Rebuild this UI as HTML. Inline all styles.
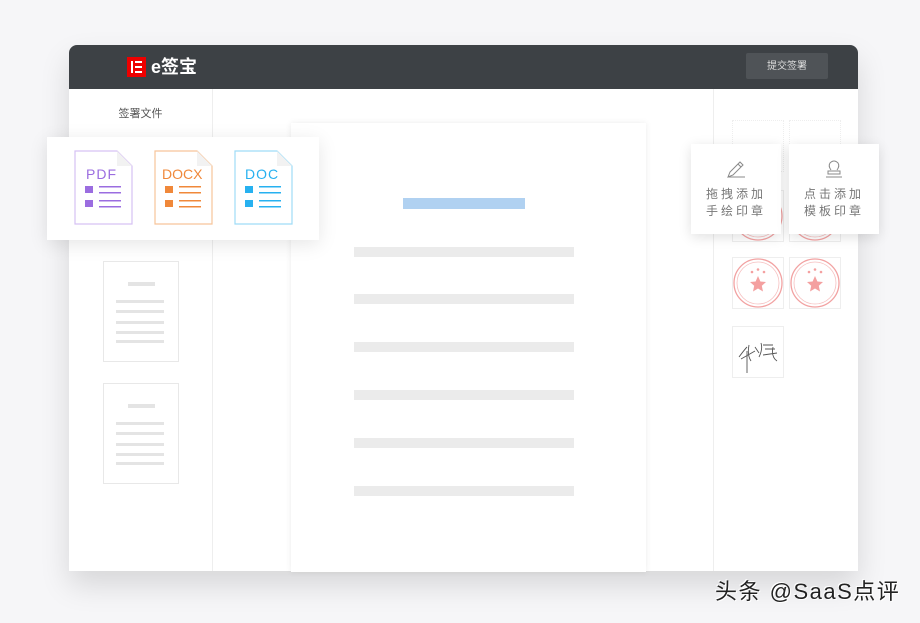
<!DOCTYPE html>
<html><head><meta charset="utf-8"><style>
*{margin:0;padding:0;box-sizing:border-box}
body{width:920px;height:623px;overflow:hidden;background:#f6f6f8;font-family:"Liberation Sans","Noto Sans CJK SC",sans-serif;position:relative}
.abs{position:absolute}
.win{left:69px;top:45px;width:789px;height:526px;background:#fff;border-radius:8px 8px 0 0;box-shadow:0 14px 30px rgba(0,0,0,0.13);overflow:hidden}
.hdr{left:0;top:0;width:789px;height:44px;background:#3d4145}
.gl{background:#ebebeb;height:10px}
.thumb{width:76px;height:101px;border:1px solid #e8e8e8;background:#fff}
.thumb i{position:absolute;background:#e4e4e4;height:3px;left:12px;width:48px}
.card{background:#fff;border:1px solid #eee}
.pop{background:#fff;box-shadow:0 3px 12px rgba(0,0,0,0.12);text-align:center;color:#777;font-size:12px;letter-spacing:3px;line-height:17px}
</style></head><body>
<div class="abs win">
 <div class="abs hdr">
  <div class="abs" style="left:58px;top:12px;width:19px;height:20px;background:#e00"><svg width="19" height="20"><rect x="4" y="4" width="2" height="12" fill="#fff"/><rect x="8" y="4" width="7" height="2" fill="#fff"/><rect x="8" y="9" width="7" height="2" fill="#fff"/><rect x="8" y="14" width="7" height="2" fill="#fff"/></svg></div>
  <div class="abs" style="left:82px;top:10px;color:#fff;font-size:18px;line-height:24px;font-weight:bold">e签宝</div>
  <div class="abs" style="left:677px;top:8px;width:82px;height:26px;background:#4f5357;border-radius:2px;color:#ddd;font-size:10px;line-height:14px;padding-top:7px;text-align:center">提交签署</div>
 </div>
 <div class="abs" style="left:143px;top:44px;width:1px;height:482px;background:#eee"></div>
 <div class="abs" style="left:644px;top:44px;width:1px;height:482px;background:#eee"></div>
 <div class="abs" style="left:0;top:60px;width:143px;text-align:center;font-size:11px;color:#555">签署文件</div>
 <div class="abs thumb" style="left:34px;top:216px"><i style="left:24px;width:27px;top:20px;height:4px"></i><i style="top:38px"></i><i style="top:48px"></i><i style="top:59px"></i><i style="top:69px"></i><i style="top:78px"></i></div>
 <div class="abs thumb" style="left:34px;top:338px"><i style="left:24px;width:27px;top:20px;height:4px"></i><i style="top:38px"></i><i style="top:48px"></i><i style="top:59px"></i><i style="top:69px"></i><i style="top:78px"></i></div>
</div>
<div class="abs" style="left:291px;top:123px;width:355px;height:449px;background:#fff;box-shadow:0 0 6px rgba(0,0,0,0.08)">
 <div class="abs" style="left:112px;top:75px;width:122px;height:11px;background:#b0d1f1"></div>
 <div class="abs gl" style="left:63px;top:124px;width:220px"></div>
 <div class="abs gl" style="left:63px;top:171px;width:220px"></div>
 <div class="abs gl" style="left:63px;top:219px;width:220px"></div>
 <div class="abs gl" style="left:63px;top:267px;width:220px"></div>
 <div class="abs gl" style="left:63px;top:315px;width:220px"></div>
 <div class="abs gl" style="left:63px;top:363px;width:220px"></div>
</div>
<div class="abs card" style="left:732px;top:120px;width:52px;height:52px;border-style:dotted"></div>
<div class="abs card" style="left:789px;top:120px;width:52px;height:52px;border-style:dotted"></div>
<div class="abs card" style="left:732px;top:190px;width:52px;height:52px"><svg width="50" height="50"><circle cx="25" cy="25" r="24" fill="none" stroke="#f2a2a2" stroke-width="1.3"/><circle cx="25" cy="25" r="21" fill="none" stroke="#f6c0c0" stroke-width="0.8"/></svg></div>
<div class="abs card" style="left:789px;top:190px;width:52px;height:52px"><svg width="50" height="50"><circle cx="25" cy="25" r="24" fill="none" stroke="#f2a2a2" stroke-width="1.3"/><circle cx="25" cy="25" r="21" fill="none" stroke="#f6c0c0" stroke-width="0.8"/></svg></div>
<div class="abs card" style="left:732px;top:257px;width:52px;height:52px"><svg width="50" height="50"><circle cx="25" cy="25" r="24" fill="none" stroke="#f2a2a2" stroke-width="1.3"/><circle cx="25" cy="25" r="21" fill="none" stroke="#f6c0c0" stroke-width="0.8"/><polygon points="25,18 27.4,23.5 33,24 28.8,27.8 30,33.5 25,30.5 20,33.5 21.2,27.8 17,24 22.6,23.5" fill="#f4a0a0"/><circle cx="19" cy="14" r="1.3" fill="#f4a0a0"/><circle cx="25" cy="11.5" r="1.3" fill="#f4a0a0"/><circle cx="31" cy="14" r="1.3" fill="#f4a0a0"/></svg></div>
<div class="abs card" style="left:789px;top:257px;width:52px;height:52px"><svg width="50" height="50"><circle cx="25" cy="25" r="24" fill="none" stroke="#f2a2a2" stroke-width="1.3"/><circle cx="25" cy="25" r="21" fill="none" stroke="#f6c0c0" stroke-width="0.8"/><polygon points="25,18 27.4,23.5 33,24 28.8,27.8 30,33.5 25,30.5 20,33.5 21.2,27.8 17,24 22.6,23.5" fill="#f4a0a0"/><circle cx="19" cy="14" r="1.3" fill="#f4a0a0"/><circle cx="25" cy="11.5" r="1.3" fill="#f4a0a0"/><circle cx="31" cy="14" r="1.3" fill="#f4a0a0"/></svg></div>
<div class="abs card" style="left:732px;top:326px;width:52px;height:52px"><svg width="50" height="50"><path d="M6 30 Q12 22 14 20 M8 32 L22 24 M16 18 Q14 28 18 34 M22 20 L26 26 M28 16 Q30 22 26 30 M30 18 L40 18 M32 22 L42 22 M30 28 L44 26 M40 20 Q38 30 44 34 M14 24 L14 46" stroke="#555" stroke-width="0.9" fill="none"/></svg></div>
<div class="abs pop" style="left:691px;top:144px;width:90px;height:90px;padding-top:42px"><svg class="abs" style="left:34px;top:16px" width="22" height="22"><path d="M3 17 L5 12 L15 2 L18 5 L8 15 Z M13 4 L16 7 M3 17 L20 17" stroke="#888" stroke-width="1" fill="none"/></svg>拖拽添加<br>手绘印章</div>
<div class="abs pop" style="left:789px;top:144px;width:90px;height:90px;padding-top:42px"><svg class="abs" style="left:34px;top:14px" width="22" height="24"><path d="M8 12 Q5 8 7 5 Q11 1 15 5 Q17 8 14 12 M5 13 L17 13 L17 16 L5 16 Z M3 19 L19 19" stroke="#888" stroke-width="1" fill="none"/></svg>点击添加<br>模板印章</div>
<div class="abs" style="left:47px;top:137px;width:272px;height:103px;background:#fff;box-shadow:0 4px 18px rgba(0,0,0,0.10)">
 <svg class="abs" style="left:27px;top:13px" width="60" height="76"><path d="M1 1 L43 1 L58 16 L58 74 L1 74 Z" fill="#fff" stroke="#d6c2f3" stroke-width="1.2"/><path d="M43 1 L43 16 L58 16" fill="#f2f2f2"/><text x="12" y="29" font-family="Liberation Sans" font-size="14" fill="#9b6de0" letter-spacing="1">PDF</text><rect x="11" y="36" width="8" height="7" fill="#9b6de0"/><rect x="11" y="50" width="8" height="7" fill="#9b6de0"/><g fill="#9b6de0"><rect x="25" y="36" width="22" height="1.5"/><rect x="25" y="42" width="22" height="1.5"/><rect x="25" y="50" width="22" height="1.5"/><rect x="25" y="56" width="22" height="1.5"/></g></svg>
 <svg class="abs" style="left:107px;top:13px" width="60" height="76"><path d="M1 1 L43 1 L58 16 L58 74 L1 74 Z" fill="#fff" stroke="#f6c49a" stroke-width="1.2"/><path d="M43 1 L43 16 L58 16" fill="#f2f2f2"/><text x="8" y="29" font-family="Liberation Sans" font-size="14" fill="#f0883a">DOCX</text><rect x="11" y="36" width="8" height="7" fill="#f0883a"/><rect x="11" y="50" width="8" height="7" fill="#f0883a"/><g fill="#f0883a"><rect x="25" y="36" width="22" height="1.5"/><rect x="25" y="42" width="22" height="1.5"/><rect x="25" y="50" width="22" height="1.5"/><rect x="25" y="56" width="22" height="1.5"/></g></svg>
 <svg class="abs" style="left:187px;top:13px" width="60" height="76"><path d="M1 1 L43 1 L58 16 L58 74 L1 74 Z" fill="#fff" stroke="#9fdcf7" stroke-width="1.2"/><path d="M43 1 L43 16 L58 16" fill="#f2f2f2"/><text x="11" y="29" font-family="Liberation Sans" font-size="14" fill="#27b1f0" letter-spacing="1">DOC</text><rect x="11" y="36" width="8" height="7" fill="#27b1f0"/><rect x="11" y="50" width="8" height="7" fill="#27b1f0"/><g fill="#27b1f0"><rect x="25" y="36" width="22" height="1.5"/><rect x="25" y="42" width="22" height="1.5"/><rect x="25" y="50" width="22" height="1.5"/><rect x="25" y="56" width="22" height="1.5"/></g></svg>
</div>
<div class="abs" style="left:715px;top:578px;font-size:22px;letter-spacing:1.5px;color:#222;text-shadow:1px 1px 0 #fff,-1px -1px 0 #fff;line-height:28px;white-space:nowrap">头条 @SaaS点评</div>
</body></html>
